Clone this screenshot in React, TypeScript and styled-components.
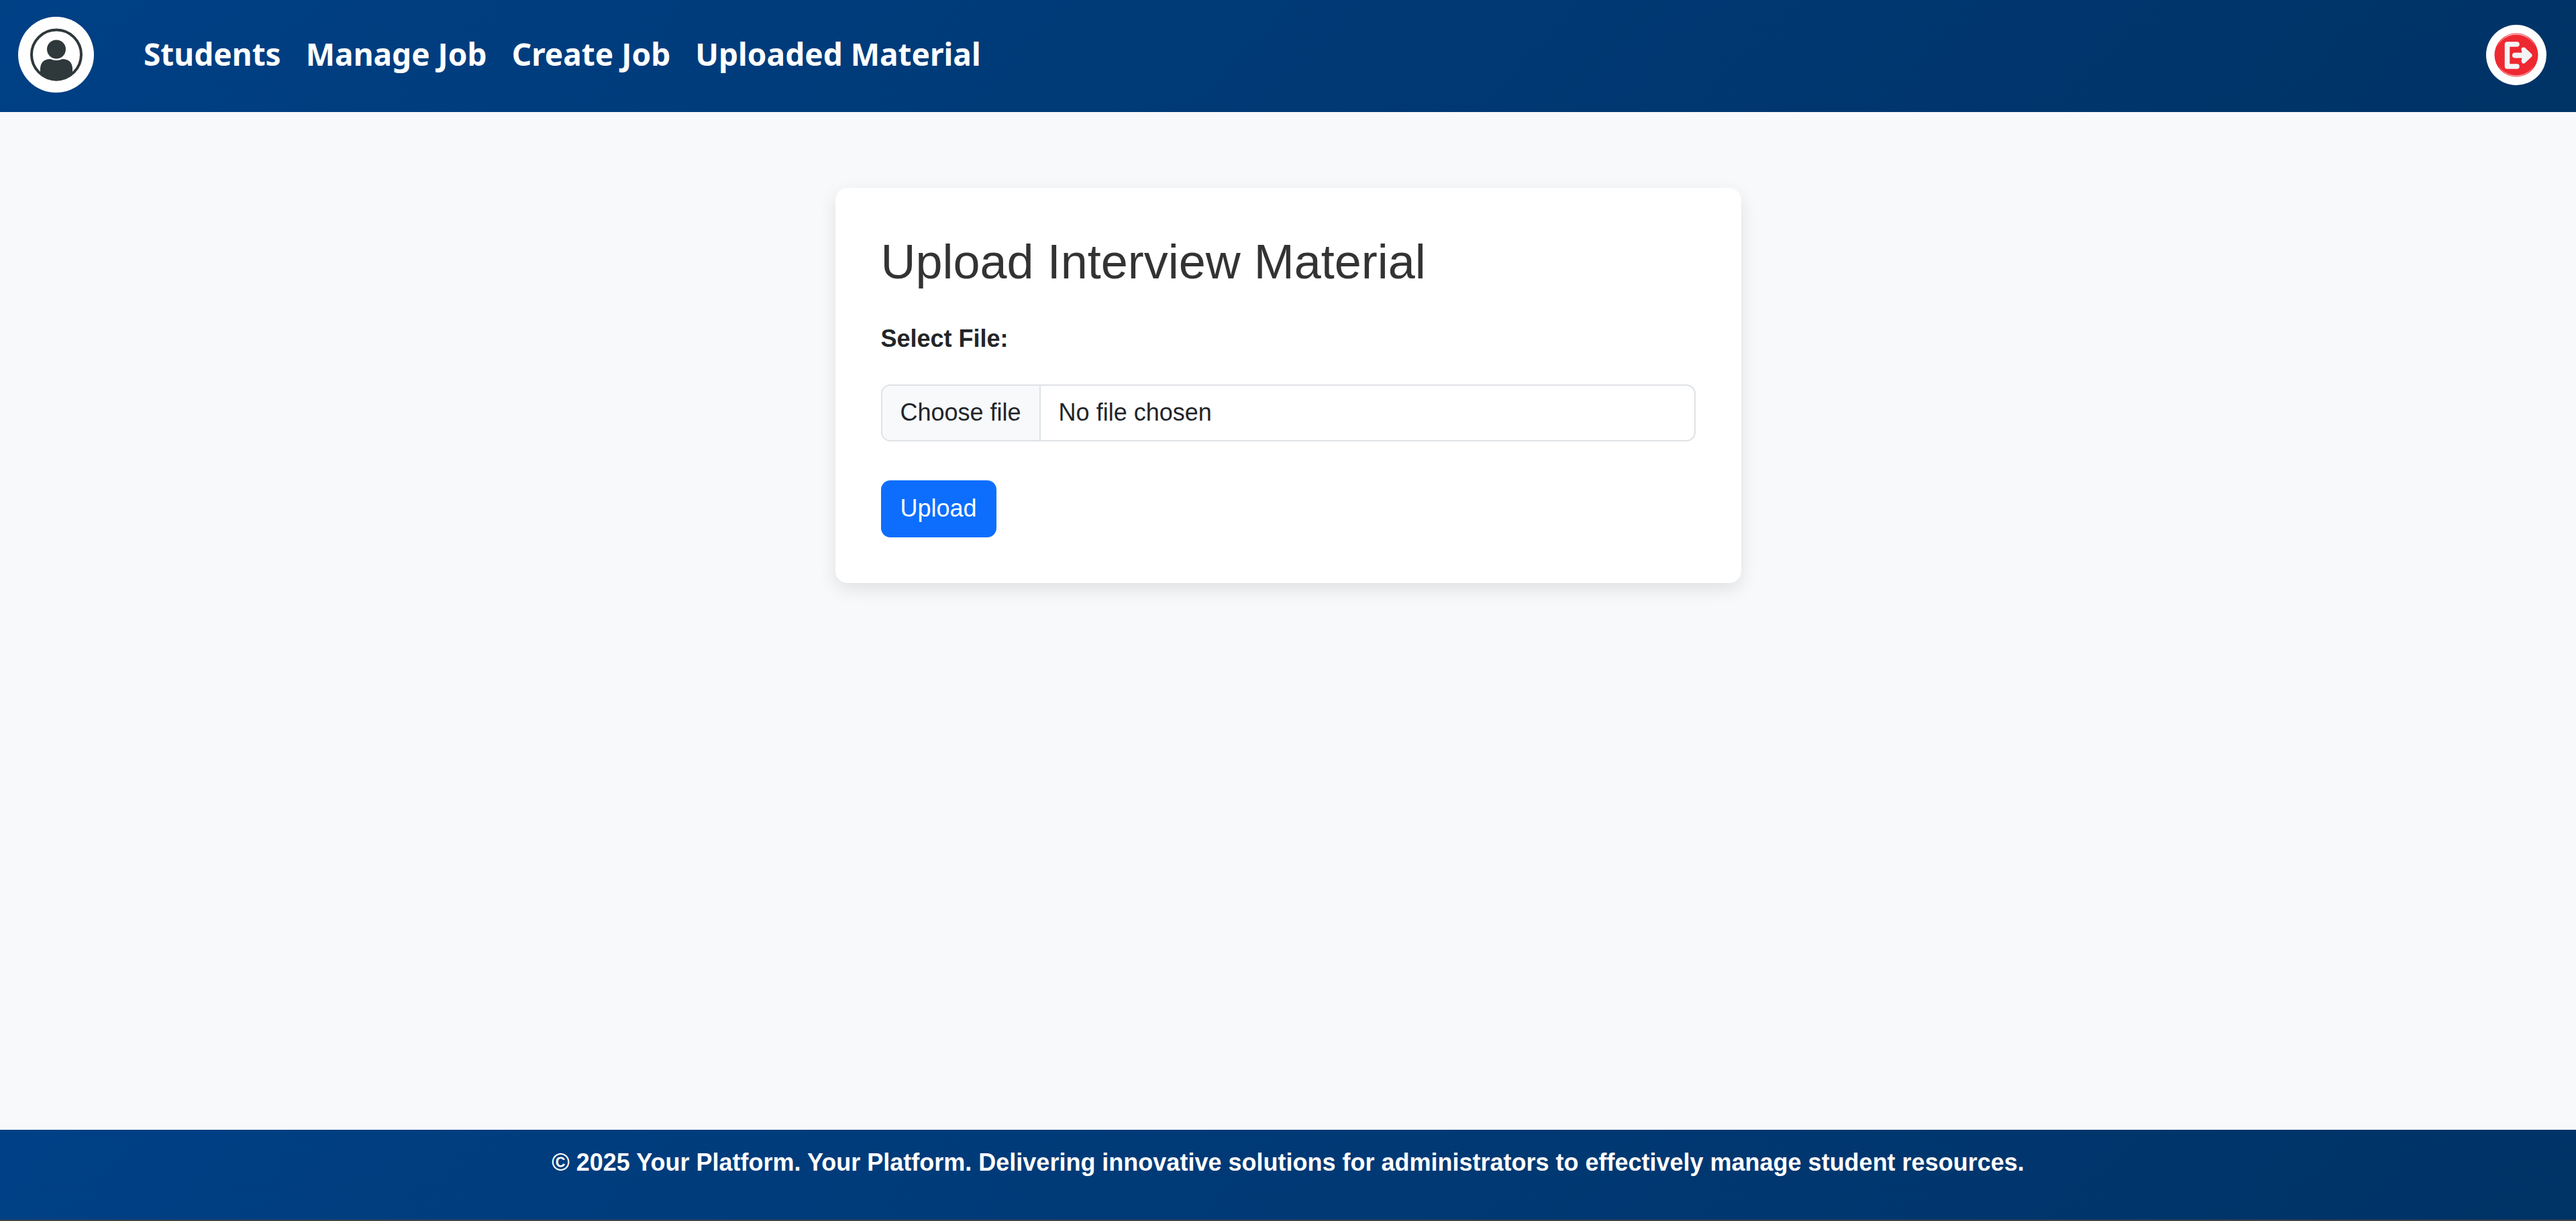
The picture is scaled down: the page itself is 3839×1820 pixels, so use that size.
import React, { useRef, useState } from "react";
import styled, { createGlobalStyle } from "styled-components";

const brandGradient = "linear-gradient(135deg, #004085, #003366)";

const GlobalStyle = createGlobalStyle`
  *, *::before, *::after { box-sizing: border-box; }
  body {
    margin: 0;
    background: #f8f9fb;
    color: #212529;
    font-family: "Liberation Sans", Arial, sans-serif;
    font-size: 36px;
    line-height: 54px;
  }
`;

const Page = styled.div`
  display: flex;
  flex-direction: column;
  min-height: 100vh;
`;

const Header = styled.header`
  display: flex;
  align-items: center;
  justify-content: space-between;
  padding: 25px 44px 29px 27px;
  background: ${brandGradient};
`;

const HeaderStart = styled.div`
  display: flex;
  align-items: center;
  gap: 74px;
`;

const RoundLink = styled.a<{ $size: number }>`
  display: flex;
  align-items: center;
  justify-content: center;
  width: ${(p) => p.$size}px;
  height: ${(p) => p.$size}px;
  border-radius: 50%;
  background: #fff;
`;

const RoundButton = styled(RoundLink).attrs({ as: "button" })`
  padding: 0;
  border: 0;
  cursor: pointer;
`;

const Nav = styled.nav`
  display: flex;
  gap: 37px;
  padding-bottom: 3px;
`;

const NavLink = styled.a`
  color: #fff;
  font-family: "Noto Sans", "Open Sans", sans-serif;
  font-size: 46px;
  font-weight: 700;
  line-height: 68px;
  text-decoration: none;
`;

const Main = styled.main`
  flex: 1;
  padding: 113px 27px;
`;

const Card = styled.section`
  max-width: 1350px;
  margin: 0 auto;
  padding: 67px 68px 68px;
  border-radius: 18px;
  background: #fff;
  box-shadow: 0 9px 27px rgba(0, 0, 0, 0.1);
`;

const Title = styled.h2`
  margin: 0 0 45px;
  color: #333;
  font-size: 72px;
  font-weight: 400;
  line-height: 86px;
`;

const Form = styled.form`
  display: flex;
  flex-direction: column;
  align-items: flex-start;
`;

const FieldLabel = styled.label`
  margin-bottom: 41px;
  font-weight: 700;
`;

const FilePicker = styled.label`
  display: flex;
  width: 100%;
  margin-bottom: 58px;
  border: 2px solid #dee2e6;
  border-radius: 14px;
  overflow: hidden;
  cursor: pointer;

  &:focus-within { border-color: #86b7fe; }
`;

const HiddenInput = styled.input`
  position: absolute;
  width: 1px;
  height: 1px;
  opacity: 0;
`;

const PickerButton = styled.span`
  padding: 13px 27px 14px;
  border-right: 2px solid #dee2e6;
  background: #f8f9fb;
`;

const PickerName = styled.span`
  padding: 13px 27px 14px;
`;

const SubmitButton = styled.button`
  padding: 15px 29px 16px;
  border: 0;
  border-radius: 14px;
  background: #0d6efd;
  color: #fff;
  font: inherit;
  cursor: pointer;
`;

const Footer = styled.footer`
  padding: 22px 27px 58px;
  border-bottom: 2px solid #444;
  background: ${brandGradient};
  color: #fff;
  font-weight: 700;
  text-align: center;
`;

const FooterText = styled.p`
  margin: 0;
`;

const ProfileIcon = () => (
  <svg width="78" height="79" viewBox="0 0 78 79" aria-hidden="true">
    <circle cx="39" cy="39.5" r="37" fill="none" stroke="#2f383b" strokeWidth="4" />
    <circle cx="39" cy="31.5" r="14" fill="#2f383b" />
    <path
      d="M15 66V60Q16 46 30 46Q39 50 48 46Q62 46 63 60V66Q53 78.500 39 78.500T15 66Z"
      fill="#2f383b"
    />
  </svg>
);

const LogoutIcon = () => (
  <svg width="66" height="66" viewBox="0 0 66 66" aria-hidden="true">
    <defs>
      <linearGradient id="gloss" x1="0" y1="0" x2="0" y2="1">
        <stop offset="0" stopColor="#fff" stopOpacity="0.7" />
        <stop offset="0.3" stopColor="#fff" stopOpacity="0" />
        <stop offset="0.75" stopColor="#fff" stopOpacity="0" />
        <stop offset="1" stopColor="#fff" stopOpacity="0.6" />
      </linearGradient>
    </defs>
    <circle cx="33" cy="33" r="32.5" fill="#ee2831" />
    <circle cx="33" cy="33" r="31" fill="none" stroke="url(#gloss)" strokeWidth="1.500" />
    <g fill="none" stroke="#f4f4f5" strokeLinecap="round" strokeLinejoin="round">
      <path d="M34 17H19.500V50H34" strokeWidth="7.500" />
      <path d="M31 33.500H48" strokeWidth="8" />
      <path d="M44 25L53 33.500L44 42L46 33.500Z" fill="#f4f4f5" strokeWidth="7" />
    </g>
  </svg>
);

const links = ["Students", "Manage Job", "Create Job", "Uploaded Material"];

export default function App() {
  const [fileName, setFileName] = useState("No file chosen");
  const input = useRef<HTMLInputElement>(null);

  return (
    <Page>
      <GlobalStyle />
      <Header>
        <HeaderStart>
          <RoundLink href="#profile" aria-label="Profile" $size={113}>
            <ProfileIcon />
          </RoundLink>
          <Nav>
            {links.map((text) => (
              <NavLink key={text} href={"#" + text.toLowerCase().replace(" ", "-")}>
                {text}
              </NavLink>
            ))}
          </Nav>
        </HeaderStart>
        <RoundButton type="button" aria-label="Log out" $size={90}>
          <LogoutIcon />
        </RoundButton>
      </Header>
      <Main>
        <Card>
          <Title>Upload Interview Material</Title>
          <Form onSubmit={(e) => e.preventDefault()}>
            <FieldLabel htmlFor="file">Select File:</FieldLabel>
            <FilePicker htmlFor="file">
              <HiddenInput
                ref={input}
                id="file"
                type="file"
                onChange={() => setFileName(input.current?.files?.[0]?.name ?? "No file chosen")}
              />
              <PickerButton>Choose file</PickerButton>
              <PickerName>{fileName}</PickerName>
            </FilePicker>
            <SubmitButton type="submit">Upload</SubmitButton>
          </Form>
        </Card>
      </Main>
      <Footer>
        <FooterText>
          © 2025 Your Platform. Your Platform. Delivering innovative solutions for administrators to
          effectively manage student resources.
        </FooterText>
      </Footer>
    </Page>
  );
}
